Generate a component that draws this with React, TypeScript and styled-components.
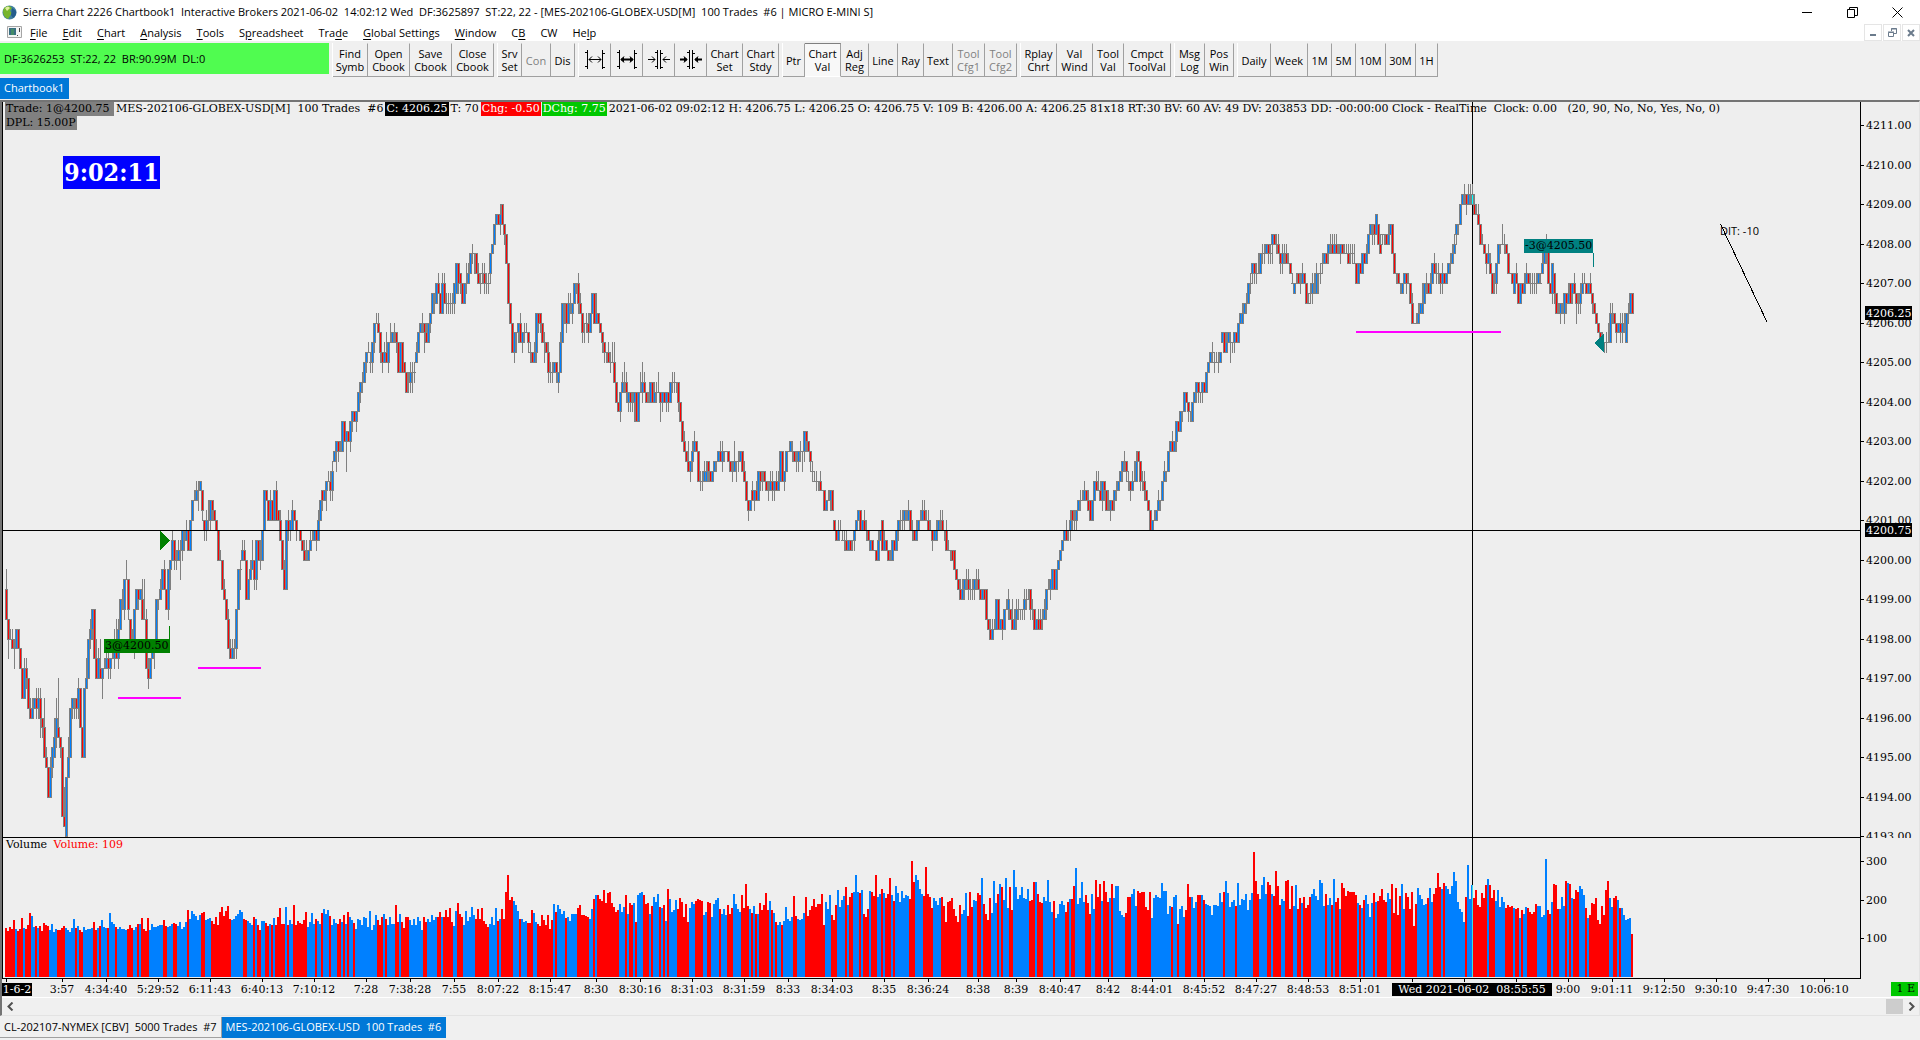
import React from "react";
import styled, { createGlobalStyle } from "styled-components";

/* ------------------------------------------------------------------ data */

// One token per bar, two pixels apart: open>close^high_low in ticks above 4193.
// A token without ">" closes where it opened.
const PRICE_ROWS: [number, string][] = [
  [6, "25>22^27 22>20_18 20^21 20>19^21 19^20_17 19>21 21>19 19>17 17>14 14>17^18 17>16^18_15 16>13 13>12^14 12>13^14 13>14 14>13^15_12 13>14^15_12 14>12^15_10 12>11_10 11>8^14 8>7^9 7>4"],
  [50, "4>7^8 7>9_6 8>10^12 10>12^14_9 11>10^16 10>9_8 9>2 2>1^5 0>6 6>8^10 8>13 13>14_12 14_12 14>13_12 13>15^16_12 15>11 11>8 8>15 15>16^18 16>20 20>21^22_19 21>23_20 23>18 18>16^20 16>18^19"],
  [100, "17>16^20 16>17_14 17^18 17>18^19 18>17^19_16 17>18_16 18^19 18>19^21_17 19>18^22 18>21^22_17 21>24 24^25_23 23>26_22 26^28 26>23_22 22>20 20^21_19 20>23_18 23>25 25>24_23 24>25 24>22^26 22^26 22>17^23 17>16^18_15"],
  [150, "16>18 18>19 19>20_17 20>24 24_23 24>25^26 25>27 27>25^28 25>23 23>27_22 27>28_25 28>30^31 30>28_27 28^29_27 28>29^30 29^30_26 29>31_28 30^31_29 30>31^32 31>29 29>32 32>34 34^35 34>35^36 35^36_33"],
  [200, "35>36 35>33_32 32>31_30 31>32^33_30 32^34_31 32>34_31 34>33_32 33>32 32>31 31>28 28^29 28>25 25>24^26 24>22 22>19^23 19>18^20 18>19^20 19^20_18 19>23_18 23>27 27^28_25 28>29^30 29>28^30 28>24 24>26"],
  [250, "26>27^28 27>28^30 28>26_25 26>30_25 30>28 28^30_27 28>31 31>35 35>34 34>32 32>34^35 34>32 32>35 35>32^36 33>32 32>30^33 30>27 27>25^28 25>32 32>31^33_30 31>32_30 31>33^34 33>32 32>31_30 31"],
  [300, "31>30 30>29 29>28^30 28^30 28>29 29>30^31 30^31 30>31 31>30_29 30>32^33 32>34 35>34_33 34>35 35>36_33 36^37 36>35^37_34 35>37^38_34 38>39 39>40_37 40>39_38 39^40 39>42 42>40 40>41_37 41>40"],
  [350, "40>42_39 42>43_41 43>42 42>43_41 43>45 45>46_44 46^47_45 46>48 48>49_47 49^50 48^49_47 48>50_47 50>52_49 52^53 52>51^53 51>49_48 49>48_47 48>49^50 49>48^51 48>50_47 50^52 50>51 51^52_50 51>50_49 50>47"],
  [400, "47>50 50>47 48>47 47>45 47_45 46>47^48_45 47^48_45 47^48_46 48>49^50 49>51 51>52 52^53_51 52>51_49 51>50^52 50>52 52>53_51 53>55 55_53 54>56 56>55^57 55>53 53>56^57 56>54^57 54^55_53 54^55_53"],
  [450, "54^55_53 54^55_53 54>56_53 55>58 58>56_55 57>56_55 56>54 54>56 56^58_55 56>57^58 57>59 59^60_58 59_57 59>57 57>56^58 56^57_55 57^58_56 57>56^58_55 56^57_55 56^57_55 57>59_56 59>60 60>62 62>63 63>62"],
  [500, "62>63^64_61 64>62 62>61_60 61>58 58>54 54>52 52>49 49>51_48 51_49 51>52_50 52>50^53 50>51_49 51^52_50 51^52 51>50_49 49^50_48 49>48 48>49^50 49>53_48 53>52_51 53>52_51 52>50 50^51_48 50>49 49>47^50_46"],
  [550, "47^48_46 47^48_46 47>48 48>47_46 46>47_45 47>50^51 50>54 54_52 54>52_51 52>54^55 54^55_53 53>54_52 54>56 56_55 56>54^57_53 54>53^55 53>51_50 52_50 52^53_51 52>51^53_50 51>53 53>55 55>52 52>53^55 53>52"],
  [600, "52>51 51>50_49 50>49_48 49_48 49>48^50 48^49_47 48^50 48>46^50 46>44 44>43 43>45_42 45>46^47 46^48_45 46>45^47_44 44>45_43 45>44_43 44^45_43 44>45_42 45>42 42>45 45^47 45>46^48_44 46>45^47 45>44 44^45"],
  [650, "44>46 46>44 44>45^46 45^46_44 45^47 45>44_42 44>45_43 45>44 44>45_43 45>44_43 44>46 46^47_45 46^47_45 46_45 46>44_43 44>42 42>40 40>39^41 39>38 38>37^40 37>38_36 38>39^40_37 39>40^41 40>39 39>36"],
  [700, "36^37_35 36^37_35 36>37^38 36>37^38 38>37_36 37>36 36>37 37>38 38_37 38>39 39>38^40 38>39^40_37 39_38 39 39>38 38>37 37^38_36 37>38^40 38_36 38^39_37 38>39 39>37 37>36^38 36>34 34>33_32"],
  [750, "33>34 35>34^36 34>35_33 35>34^36 34>37 37>36_35 37_35 37>36 36>35 35^36_34 35>36^37 36>35^37_34 35>36_34 36>35^37 35>36^37 36>39 39>36 36>37_35 37>39 39 39>40 39^40_38 39>38 38^39_37 38>39_37"],
  [800, "39^40_38 39_37 39>41_38 41>40_39 40>39 39>38_37 37^38_36 36^37 36^37_35 36_35 36>35^37 35 35>33 33>34 34^35 34>35_33 35>33 32>31 31>30 30>31^32 31^32 30^31 30^31_29 30>29^31 29>30"],
  [850, "30>29 30_29 30>31_29 31>32 32>33 33>31 31>32 32>31^33 31^32_30 31>30 29>30 30>29 29 29>28 28>30^31 30>31 32>29 29>30^31 30>29 29>28 28^29 28>30 30>29 29>31 31>32_30"],
  [900, "32^33_31 32^33_31 32>33_31 33_32 32>33^34 33>31 31^32_30 31>30 30>31^32 31>32 32^33 32>33^34 33>32^34 32^33 32>31^33 31^32 31>30_29 30>31 30>31^32 31>32 32^33_31 32>31^33 31_30 31>29^32 29^30"],
  [950, "29_28 29>28 29>27 27>26 26>25 25>24^26 24>25^26 25>26_24 26^27_25 26>25^27_24 25^26_24 25^26_24 25>26_24 26^27_25 26>25^27 25>24 24>25 25>24 25>22 22>21 21>20^22 20>21^22 21^22 21>24 24>21"],
  [1000, "21>22 22>21_20 21>23 23^24 23>24^25_22 23>22 22>21^24 21>22^23 22>23^24_21 23^24_22 23_22 23_22 23>24^25_22 24^25_23 24^25 25>23_22 23^24_22 23>21 21>22 22>21^23 22>21^23 22^23_21 22>23^24 23>25_22 25^26"],
  [1050, "25>26_24 25>27 27>25 25>27 27>28 28>29 29>30 30>31 31>30^32 31_30 31>32^33_30 33>32_31 32^33_31 32>33_31 33>34 34^35_33 34^35 34>35^36 35>34 34>33^35 34>32 32>34 34>36 36>35^37 35^37"],
  [1100, "35>34^36 34>36_33 36>35_34 35>33 33^35 33>34_32 34>33 34>35_33 35^36_34 35>36 36>37 37>38_36 38^39_37 38>37_36 36^37_35 36>35_34 35>36^37 36^38 36>38^39 39>38 38>36_35 36^37_35 36>35^37_34 35>34 34>33"],
  [1150, "33>31 31>32 32^33 32>33 33>34^35 34_33 34>36 36>37^38 37_36 37>39 39>40 40>39^41 39>40 40>42_39 42>41 41>43 43_42 43>45 45>44 44>43_42 43_42 42>44 44>45 45>46_44 46>45_44"],
  [1200, "45_44 45>46_44 46>45 45>47 47>48 48>49 49^50_48 48^49_47 48^49 48^49_47 48>49 50>51 51>49 49>50^51 50>51 50^51_48 50_49 50>51_49 51>50 50>52 52>53 52>53^54 53>54 54^55_53 54>56"],
  [1250, "56^57_55 57>58_56 58>57_56 57^58_56 57^59 57>59 59^60_58 59^60_58 59>60 60>59_58 59^60_58 60>61_58 61>60 60^61_59 60>59^61 59>58_57 58>59^60_57 59^60_58 59>58^60 58^59 58>57 56^57 55>56 56^57 57>56"],
  [1300, "57_55 56>57^58 57>56 56>54 54^55 55^56_54 55>56^57_54 56^57_55 55>57^58 57_55 57^58_56 58^59_57 58>59 59>58 59>60_58 60^61_59 60>59^61 59>60^61 60>59^61 59^60 59>60_58 60>59 59^60 59^60 59>58^60"],
  [1350, "59^60_58 59^60_58 58^60 58>56 56>58 58>57 57>59 59>58 58>59^60 59>61 61>62 62_60 62>61_60 61>63 62>60 60>59^61 61_60 61_60 61>60 60>61^62 61>62 62>59 59>57 57_56 57>56"],
  [1400, "56_55 55>56 56>57 57>56_55 56^57 56>54 54>52^55 52 52^53 52>53^54 53>54 53>54^56 54>56 56^57_55 56>55 55>56^57 56>58 58>57^59 57^58_56 57^58_56 57>56_55 56>57^58_55 57>56 56>57 57>58"],
  [1450, "58^59_57 58>59^60 59>60^61 61>62_60 62_61 62>64 64>65 65^66_64 65>64_63 64>65^66 65^66_64 64>65^66 64>63^65 63^64 63>62^64 62>60 60^61 60>59 59>58_57 58>59^60 58>57^59 57>55 56^57_55 56>58_55 58>60"],
  [1500, "60_59 60^62 60^61_59 60>59 59>57 57 57>56 55>57 57>56^58 56>54 54>56 56>55 55>56^57 56>57^58 57>56 56^57_55 56^57_55 56^57_55 56^57_55 56>57 56^57 57>58^59 58>60 60^61_58 60>56"],
  [1550, "56>55 55>58_54 57>55_54 55>53 53^54 53>54_52 54_53 53>55_52 55>54_53 54>55^56 56>54 55>56_54 56>55^57 55>54_52 54^55_53 54>55^56_53 55>56^57 56^57 56>55 55>56 56>55^57 55>54_53 54>53 53>52 52>51"],
  [1600, "51>50 50^51 50_49 50^51_49 50^52 50>53^54 53^54_52 53>52 52>51_50 51>52 52>51^53_50 51>52^53_50 52^53_51 50>53 53^54_52 53>55 55>53"],
];

// Volume bar heights, keyed by the x of the first bar in the row.
const VOLUME_ROWS: [number, string][] = [
  [6, "49 46 50 48 57 48 46 48 59 49 48 52 64 61 50 51 49 51 46 54 52 51 47 53 45 48 47 47 49 51 49 47 45 49 58 49 51 47 45 50 47 48 48 49 55 47 49 51 57 50"],
  [106, "49 49 64 55 53 50 48 50 48 48 47 48 52 49 47 50 53 53 59 48 46 59 47 53 50 50 51 52 52 57 51 50 51 53 54 53 51 55 48 50 55 67 58 66 63 61 57 62 64 65"],
  [206, "57 58 59 56 53 60 52 65 70 61 66 71 58 57 58 61 63 67 65 58 57 56 54 52 60 58 52 47 56 56 54 51 53 52 59 52 60 69 53 53 70 52 57 53"],
  [294, "72 52 56 54 53 57 65 50 55 64 53 58 56 53 64 68 63 67 61 52 58 54 53 58 55 62 53 65 60 57 54 48 58 57 52 60 59 50 66 47 52 62 57 52 60 63 58 52 60 53 53 72 55 63 55 49 60 60 57 52 58"],
  [416, "52 60 56 47 60 55 58 55 62 57 60 60 65 60 60 67 60 69 55 51 66 74 63 60 52 66 56 60 70 62 58 68 58 69 56 53 50 53 60 52 69 56 58 68 58 85 102 77 80 76 72 66 58 58 55"],
  [526, "56 54 54 67 64 55 53 51 62 57 52 62 48 57 73 65 72 68 63 66 59 60 56 63 63 63 69 72 62 62 61 60 58 68 78 82 82 78 76 87 74 84 85 74 70 65 67 73 65 70 82 63 74 72 74 55 82"],
  [640, "84 85 82 73 74 63 71 80 75 83 70 69 72 56 88 78 65 67 77 68 79 75 60 73 55 69 75 73 76 78 77 76 62 65 75 74 60 73 77 79 68 63 68 62 72 63 69 83 73 68 65 82"],
  [744, "69 93 71 68 64 71 63 63 74 67 72 84 67 76 67 64 55 52 55 52 56 70 58 56 60 81 61 58 57 58 64 80 61 67 71 78 70 73 73 83 52 75 68 82 62 57 72 87 70 77"],
  [844, "81 90 72 80 84 85 102 85 84 87 63 60 68 86 85 81 102 80 83 88 84 79 83 99 82 76 91 84 75 86 79 82 81 78 116 95 102 97 88 83 81 110 83 80 69 79 76 72 79 80"],
  [944, "71 55 75 76 79 68 61 55 72 63 67 84 61 85 70 77 76 84 82 99 73 63 57 79 64 96 74 83 93 90 77 99 69 90 67 107 90 78 82 90 79 78 88 76 77 95 95 83 75 74"],
  [1044, "80 76 97 75 65 76 59 63 73 76 72 65 75 78 78 91 109 73 79 95 75 82 74 63 83 68 97 80 93 76 96 85 75 79 93 79 91 91 66 62 60 64 80 80 83 88 71 86 84 85"],
  [1144, "85 70 67 85 59 79 82 80 79 94 86 86 63 71 70 80 82 53 68 71 60 67 93 80 80 69 75 82 82 82 77 73 72 71 62 72 72 71 84 75 85 96 84 70 75 77 71 94 72 78"],
  [1244, "77 83 67 77 84 125 96 83 78 92 100 83 95 92 83 81 106 91 72 78 76 96 97 68 91 71 92 68 79 74 80 69 72 80 83 88 81 77 97 94 71 83 72 79 72 98 75 79 68 94"],
  [1344, "89 81 86 85 85 85 82 74 72 69 77 82 73 60 74 84 75 76 81 88 77 75 84 78 93 64 89 62 81 93 68 84 80 68 85 51 73 89 82 78 72 73 79 89 75 83 89 104 90 88 94"],
  [1446, "91 88 83 91 105 96 75 68 65 55 80 112 78 92 79 87 72 70 84 79 92 98 92 79 87 76 87 70 80 75 69 72 70 71 69 68 69 59 67 63 70 69 65 63 65 73 71 71 60 62"],
  [1546, "118 67 63 75 93 92 68 68 80 71 96 94 93 79 78 87 85 91 88 82 69 59 62 74 73 79 57 53 71 62 87 96 79 70 79 81 77 69 69 62 57 58 59 43"],
];

const TIME_LABELS: [number, string][] = [
  [6, ""], [62, "3:57"], [106, "4:34:40"], [158, "5:29:52"], [210, "6:11:43"], [262, "6:40:13"],
  [314, "7:10:12"], [366, "7:28"], [410, "7:38:28"], [454, "7:55"], [498, "8:07:22"], [550, "8:15:47"],
  [596, "8:30"], [640, "8:30:16"], [692, "8:31:03"], [744, "8:31:59"], [788, "8:33"], [832, "8:34:03"],
  [884, "8:35"], [928, "8:36:24"], [978, "8:38"], [1016, "8:39"], [1060, "8:40:47"], [1108, "8:42"],
  [1152, "8:44:01"], [1204, "8:45:52"], [1256, "8:47:27"], [1308, "8:48:53"], [1360, "8:51:01"],
  [1412, ""], [1464, ""], [1516, ""], [1568, "9:00"], [1612, "9:01:11"], [1664, "9:12:50"],
  [1716, "9:30:10"], [1768, "9:47:30"], [1824, "10:06:10"],
];

const MENUS = ["_File", "_Edit", "_Chart", "_Analysis", "_Tools", "S_preadsheet", "Tra_de", "_Global Settings", "_Window", "C_B", "CW", "He_lp"];

type Tool = { label?: string; width: number; off?: boolean; pressed?: boolean; arrows?: "out" | "outBold" | "in" | "inBold"; name?: string };

const TOOL_GROUPS: Tool[][] = [
  [{ label: "Find\nSymb", width: 35 }, { label: "Open\nCbook", width: 42 }, { label: "Save\nCbook", width: 42 }, { label: "Close\nCbook", width: 42 }],
  [{ label: "Srv\nSet", width: 24 }, { label: "Con", width: 29, off: true }, { label: "Dis", width: 24 }],
  [
    { arrows: "out", name: "Increase bar spacing", width: 32 },
    { arrows: "outBold", name: "Increase bar width", width: 32 },
    { arrows: "in", name: "Decrease bar spacing", width: 32 },
    { arrows: "inBold", name: "Decrease bar width", width: 32 },
    { label: "Chart\nSet", width: 36 },
    { label: "Chart\nStdy", width: 36 },
  ],
  [
    { label: "Ptr", width: 22 }, { label: "Chart\nVal", width: 36, pressed: true }, { label: "Adj\nReg", width: 28 },
    { label: "Line", width: 29 }, { label: "Ray", width: 26 }, { label: "Text", width: 29 },
    { label: "Tool\nCfg1", width: 32, off: true }, { label: "Tool\nCfg2", width: 32, off: true },
  ],
  [{ label: "Rplay\nChrt", width: 36 }, { label: "Val\nWind", width: 36 }, { label: "Tool\nVal", width: 31 }, { label: "Cmpct\nToolVal", width: 47 }],
  [{ label: "Msg\nLog", width: 30 }, { label: "Pos\nWin", width: 29 }],
  [
    { label: "Daily", width: 33 }, { label: "Week", width: 37 }, { label: "1M", width: 24 }, { label: "5M", width: 24 },
    { label: "10M", width: 30 }, { label: "30M", width: 30 }, { label: "1H", width: 22 },
  ],
];

/* -------------------------------------------------------------- geometry */

const PANE_TOP_PRICE = 734;
const TICK = 9.875;
const levelY = (k: number) => Math.round(PANE_TOP_PRICE - k * TICK);

type Bar = { x: number; open: number; close: number; high: number; low: number; up: boolean };

const bars: Bar[] = [];
PRICE_ROWS.forEach(([start, row]) => {
  row.split(" ").forEach((token, n) => {
    const m = /^(\d+)(?:>(\d+))?(?:\^(\d+))?(?:_(\d+))?$/.exec(token)!;
    const open = +m[1];
    const close = m[2] === undefined ? open : +m[2];
    const last = bars[bars.length - 1];
    bars.push({
      x: start + n * 2,
      open,
      close,
      high: Math.max(open, close, m[3] ? +m[3] : 0),
      low: Math.min(open, close, m[4] ? +m[4] : 999),
      up: close === open ? (last ? last.up : false) : close > open,
    });
  });
});

const box = (x: number, y: number, w: number, h: number) => `M${x} ${y}h${w}v${h}h${-w}z`;
const outline = bars
  .map((b) => {
    const top = levelY(Math.max(b.open, b.close));
    const bottom = levelY(Math.min(b.open, b.close));
    const high = levelY(b.high);
    return box(b.x - 1, top, 3, bottom - top + 1) + box(b.x, high, 1, levelY(b.low) - high + 1);
  })
  .join("");
const fillPath = (up: boolean) =>
  bars
    .filter((b) => b.open !== b.close && b.close > b.open === up)
    .map((b) => {
      const top = levelY(Math.max(b.open, b.close));
      const bottom = levelY(Math.min(b.open, b.close));
      return box(b.x, top + 1, 1, bottom - top - 1);
    })
    .join("");

const upAt = new Map(bars.map((b) => [b.x, b.up]));
const VOLUME_BASE = 139;
const volumePaths = { up: "", down: "" };
VOLUME_ROWS.forEach(([start, row]) => {
  row.split(" ").forEach((v, n) => {
    const x = start + n * 2;
    volumePaths[upAt.get(x) ? "up" : "down"] += box(x - 1, VOLUME_BASE - +v, 2, +v);
  });
});

/* ---------------------------------------------------------------- styles */

const UI_FONT = '"Open Sans", "Noto Sans", sans-serif';
const CHART_FONT = '"DejaVu Serif", serif';

const Global = createGlobalStyle`
  * { box-sizing: border-box; }
  body { margin: 0; background: #f0f0f0; }
  button { font: inherit; color: inherit; border: 0; padding: 0; background: none; }
`;

const Window = styled.div`
  display: flex;
  flex-direction: column;
  height: 100vh;
  font: 11px/14px ${UI_FONT};
  color: #000;
  background: #f0f0f0;
  overflow: hidden;
`;

const TitleBar = styled.header`
  display: flex;
  align-items: center;
  gap: 6px;
  height: 24px;
  padding-left: 2px;
  background: #fff;
`;

const Title = styled.h1`
  flex: 1;
  margin: 0;
  font-size: 11px;
  font-weight: 400;
  white-space: pre;
`;

const WindowButtons = styled.div`
  display: flex;
  button { width: 46px; height: 22px; display: grid; place-items: center; }
  button + button { width: 45px; }
`;

const MenuBar = styled.nav`
  display: flex;
  align-items: center;
  gap: 8px;
  height: 17px;
  padding-left: 7px;
  background: #fff;
`;

const MenuList = styled.div`
  display: flex;
  gap: 15px;
`;

const MenuItem = styled.button`
  white-space: nowrap;
  text-underline-offset: 2px;
`;

const PaneButtons = styled.div`
  display: flex;
  gap: 1px;
  margin-left: auto;
  button { width: 18px; height: 17px; display: grid; place-items: center; border: 1px solid #e5e5e5; }
`;

const ToolBar = styled.div`
  display: flex;
  gap: 3px;
  height: 36px;
  padding-top: 2px;
`;

const Status = styled.output`
  width: 329px;
  height: 31px;
  padding-left: 4px;
  background: #50fc50;
  line-height: 31px;
  white-space: pre;
`;

const ToolGroup = styled.div`
  display: flex;
  height: 34px;
  border-left: 1px solid #fff;
`;

const ToolButton = styled.button<{ $width: number; $off?: boolean; $pressed?: boolean }>`
  display: grid;
  place-items: center;
  width: ${(p) => p.$width}px;
  border-right: 1px solid #a0a0a0;
  border-bottom: 1px solid ${(p) => (p.$pressed ? "#fff" : "#a0a0a0")};
  border-top: 1px solid ${(p) => (p.$pressed ? "#808080" : "#f0f0f0")};
  background: ${(p) => (p.$pressed ? "#f8f8f8" : "#f0f0f0")};
  color: ${(p) => (p.$off ? "#808080" : "#000")};
  line-height: 13px;
  white-space: pre;
  text-align: center;
`;

const TabStrip = styled.div<{ $height: number }>`
  display: flex;
  height: ${(p) => p.$height}px;
  padding-top: 1px;
`;

const Tab = styled.button<{ $active?: boolean }>`
  padding: 0 4px;
  white-space: pre;
  height: 21px;
  color: ${(p) => (p.$active ? "#fff" : "#000")};
  background: ${(p) => (p.$active ? "#0078d7" : "#f0f0f0")};
  border-right: 1px solid ${(p) => (p.$active ? "#0078d7" : "#a0a0a0")};
  border-bottom: 1px solid ${(p) => (p.$active ? "#0078d7" : "#a0a0a0")};
`;

const ChartFrame = styled.main`
  flex: 1;
  min-height: 0;
  display: flex;
  flex-direction: column;
  border: solid;
  border-width: 2px 1px 1px 2px;
  border-color: #747474 #e3e3e3 #e3e3e3 #747474;
  background: #eeeeee;
  font: 11px/14px ${CHART_FONT};
`;

const Grid = styled.div`
  flex: 1;
  min-height: 0;
  display: grid;
  grid-template-columns: 1fr 58px;
  grid-template-rows: 1fr 141px 18px;
`;

const Pane = styled.section`
  position: relative;
  overflow: hidden;
  border: solid #000;
  border-width: 0 1px 1px 1px;
`;

const Axis = styled.aside`
  overflow: hidden;
`;

const Canvas = styled.svg`
  display: block;
  width: 100%;
  height: 100%;
  overflow: hidden;
  text { font: 11px ${CHART_FONT}; white-space: pre; }
`;

const PlotCanvas = styled(Canvas)`
  position: absolute;
  left: 0;
  top: 0;
`;

const Legend = styled.div`
  position: absolute;
  top: 0;
  left: 2px;
  right: 0;
  display: flex;
  flex-wrap: wrap;
  column-gap: 1px;
  white-space: pre;
`;

const Value = styled.span<{ $bg?: string; $color?: string }>`
  background: ${(p) => p.$bg ?? "transparent"};
  color: ${(p) => p.$color ?? "#000"};
  padding: 0 1px;
`;

const LegendBreak = styled.span`
  flex-basis: 100%;
`;

const Mark = styled.div<{ $x: number; $y: number; $bg?: string }>`
  position: absolute;
  left: ${(p) => p.$x}px;
  top: ${(p) => p.$y}px;
  padding: 0 1px;
  background: ${(p) => p.$bg ?? "transparent"};
  white-space: pre;
`;

const Clock = styled(Mark)`
  padding: 0 1px;
  color: #fff;
  font: 700 25px/33px "DejaVu Serif Condensed", "DejaVu Serif", serif;
`;

const Note = styled(Mark)`
  font-family: ${UI_FONT};
`;

const TimeAxis = styled.div`
  grid-column: 1 / -1;
  position: relative;
`;

const TimeTag = styled.div<{ $x: number; $width: number }>`
  position: absolute;
  left: ${(p) => p.$x}px;
  top: 4px;
  width: ${(p) => p.$width}px;
  height: 13px;
  line-height: 13px;
  background: #000;
  color: #fff;
  text-align: center;
  white-space: pre;
  overflow: hidden;
`;

const Engine = styled.div`
  position: absolute;
  right: 1px;
  top: 3px;
  padding: 0 3px 0 5px;
  background: #00c800;
`;

const ScrollBar = styled.div`
  display: flex;
  align-items: center;
  justify-content: space-between;
  height: 18px;
  border-top: 1px solid #fff;
  background: #f0f0f0;
  button { width: 16px; height: 16px; display: grid; place-items: center; }
`;

const Thumb = styled.span`
  width: 17px;
  height: 15px;
  margin-left: auto;
  background: #cdcdcd;
`;

/* ------------------------------------------------------------ components */

const Globe = () => (
  <svg width="15" height="15" viewBox="0 0 15 15" aria-hidden="true">
    <circle cx="7.5" cy="7.5" r="7" fill="#3f7f9f" />
    <path d="M2 3Q7-1 10 3L8 6 10 8 8 11 6 14Q1 12 1 6z" fill="#78b52c" />
    <path d="M3 3Q6 0 8 3L5 6z" fill="#e2efa0" />
    <path d="M10 3L14 6Q15 10 11 13L9 10z" fill="#255c8c" />
  </svg>
);

const ChartIcon = () => (
  <svg width="15" height="14" viewBox="0 0 15 14" aria-hidden="true">
    <path d="M.5.5h14v11H.5z" fill="#f4f4f4" stroke="#a5a5a5" />
    <path d="M2 2h7v7H2z" fill="#3a6f82" />
    <path d="M4 3h3v6H4z" fill="#448b68" />
    <path d="M12 2h1v4h-1zM10 9h1v1h-1z" fill="#444" />
  </svg>
);

const SpacingIcon = ({ kind }: { kind: NonNullable<Tool["arrows"]> }) => {
  const bold = kind.endsWith("Bold");
  return (
    <svg width="22" height="20" viewBox="0 0 22 20" aria-hidden="true" fill="none" stroke="#000">
      {kind.startsWith("out") ? (
        <>
          <path d="M3.500 0v19M18.500 0v19M1 2.500h2M1 16.500h2M18 3.500h3M18 17.500h3" />
          <path d="M5 9.500h12" strokeWidth={bold ? 2 : 1} />
          <path d="M8 6.500L5 9.500 8 12.500M14 6.500L17 9.500 14 12.500" fill={bold ? "#000" : "none"} />
        </>
      ) : (
        <>
          <path d="M9.500 0v19M12.500 0v19M7 2.500h2M7 16.500h2M13 3.500h2M13 17.500h2" />
          <path d="M0 9.500h7M15 9.500h7" strokeWidth={bold ? 2 : 1} />
          <path d="M4 6.500L7 9.500 4 12.500M18 6.500L15 9.500 18 12.500" fill={bold ? "#000" : "none"} />
        </>
      )}
    </svg>
  );
};

const MenuLabel = ({ text }: { text: string }) => {
  const at = text.indexOf("_");
  if (at < 0) return <>{text}</>;
  return (
    <>
      {text.slice(0, at)}
      <u>{text[at + 1]}</u>
      {text.slice(at + 2)}
    </>
  );
};

const PricePane = () => (
  <Pane aria-label="Price">
    <PlotCanvas shapeRendering="crispEdges">
      <g transform="translate(-3 0)">
        <path d={outline} fill="#808080" />
        <path d={fillPath(true)} fill="#0080ff" />
        <path d={fillPath(false)} fill="#ff0000" />
        <path d={box(3, levelY(31), 2000, 1)} fill="#000" />
        <path d={box(1472, 0, 1, levelY(66)) + box(1472, levelY(64) + 1, 1, 1000)} fill="#000" />
        <path d={box(1472, levelY(65) + 1, 1, 9)} fill="#00ffff" />
        <path d={box(118, 595, 63, 2) + box(198, 565, 63, 2) + box(1356, 229, 145, 2)} fill="#ff00ff" />
        <path d="M160 429v19l10-9.500z" fill="#008000" />
        <path d={box(169, 524, 1, 14)} fill="#008000" />
        <path d="M1604 231v20l-10-10z" fill="#008080" />
        <path d={box(1593, 151, 1, 14)} fill="#008080" />
        <path d="M1720.500 122L1767 220" stroke="#000" />
      </g>
    </PlotCanvas>
    <Legend>
      <Value $bg="#808080">{"Trade: 1@4200.75 "}</Value>
      <Value>{"MES-202106-GLOBEX-USD[M]  100 Trades  #6"}</Value>
      <Value $bg="#000" $color="#fff">C: 4206.25</Value>
      <Value>T: 70</Value>
      <Value $bg="#f00" $color="#fff">Chg: -0.50</Value>
      <Value $bg="#00c800" $color="#fff">DChg: 7.75</Value>
      <Value>2021-06-02 09:02:12 H: 4206.75 L: 4206.25 O: 4206.75 V: 109 B: 4206.00 A: 4206.25 81x18 RT:30 BV: 60 AV: 49 DV: 203853 DD: -00:00:00 Clock - RealTime  Clock: 0.00   (20, 90, No, No, Yes, No, 0)</Value>
      <LegendBreak />
      <Value $bg="#808080">DPL: 15.00P</Value>
    </Legend>
    <Clock $x={60} $y={54} $bg="#0000ff">9:02:11</Clock>
    <Mark $x={101} $y={537} $bg="#008000">3@4200.50</Mark>
    <Mark $x={1521} $y={137} $bg="#008080">-3@4205.50</Mark>
    <Note $x={1716} $y={122}>DIT: -10</Note>
  </Pane>
);

const prices = Array.from({ length: 19 }, (_, i) => 4211 - i);

const AxisTag = ({ y, text }: { y: number; text: string }) => (
  <g>
    <rect x="4" y={y - 7} width="47" height="14" fill="#000" />
    <text x="5" y={y + 4} fill="#fff">{text}</text>
  </g>
);

const PriceAxis = () => (
  <Axis>
    <Canvas shapeRendering="crispEdges">
      {prices.map((p) => {
        const y = levelY((p - 4193) * 4);
        return (
          <g key={p}>
            <rect y={y} width="3" height="1" />
            <text x="5" y={y + 4}>{p.toFixed(2)}</text>
          </g>
        );
      })}
      <AxisTag y={211} text="4206.25" />
      <AxisTag y={428} text="4200.75" />
    </Canvas>
  </Axis>
);

const VolumePane = () => (
  <Pane aria-label="Volume">
    <PlotCanvas shapeRendering="crispEdges">
      <g transform="translate(-3 0)">
        <path d={volumePaths.up} fill="#0080ff" />
        <path d={volumePaths.down} fill="#ff0000" />
        <path d={box(1472, 0, 1, VOLUME_BASE - 92)} fill="#000" />
        <path d={box(1472, VOLUME_BASE - 92, 1, 92)} fill="#40e0e0" />
      </g>
    </PlotCanvas>
    <Legend>
      <Value>{"Volume "}</Value>
      <Value $color="#f00">Volume: 109</Value>
    </Legend>
  </Pane>
);

const VolumeAxis = () => (
  <Axis>
    <Canvas shapeRendering="crispEdges">
      {[300, 200, 100].map((v) => {
        const y = Math.round(VOLUME_BASE - v * 0.387);
        return (
          <g key={v}>
            <rect y={y} width="3" height="1" />
            <text x="5" y={y + 4}>{v}</text>
          </g>
        );
      })}
    </Canvas>
  </Axis>
);

const TimeScale = () => (
  <TimeAxis>
    <Canvas shapeRendering="crispEdges">
      <g transform="translate(-2 0)">
        {TIME_LABELS.map(([x, label]) => (
          <g key={x}>
            <rect x={x} width="1" height="3" />
            <text x={x} y="14" textAnchor="middle">{label}</text>
          </g>
        ))}
      </g>
    </Canvas>
    <TimeTag $x={0} $width={30}>1-6-2</TimeTag>
    <TimeTag $x={1390} $width={160}>{"Wed 2021-06-02  08:55:55"}</TimeTag>
    <Engine>1 E</Engine>
  </TimeAxis>
);

export default function App() {
  return (
    <Window>
      <Global />
      <TitleBar>
        <Globe />
        <Title>{"Sierra Chart 2226 Chartbook1  Interactive Brokers 2021-06-02  14:02:12 Wed  DF:3625897  ST:22, 22 - [MES-202106-GLOBEX-USD[M]  100 Trades  #6 | MICRO E-MINI S]"}</Title>
        <WindowButtons>
          <button aria-label="Minimize">
            <svg width="10" height="10" stroke="#000"><path d="M0 5.500h10" /></svg>
          </button>
          <button aria-label="Restore">
            <svg width="11" height="11" fill="none" stroke="#000"><path d="M.5 2.500h7v8h-7zM2.500 2.500v-2h8v8h-3" /></svg>
          </button>
          <button aria-label="Close">
            <svg width="11" height="11" stroke="#000"><path d="M.5.5l10 10M10.500.5l-10 10" /></svg>
          </button>
        </WindowButtons>
      </TitleBar>
      <MenuBar>
        <ChartIcon />
        <MenuList>
          {MENUS.map((m) => (
            <MenuItem key={m}><MenuLabel text={m} /></MenuItem>
          ))}
        </MenuList>
        <PaneButtons>
          <button aria-label="Minimize chart">
            <svg width="8" height="8" fill="#6b7b8c"><path d="M1 5h6v2H1z" /></svg>
          </button>
          <button aria-label="Restore chart">
            <svg width="9" height="9" fill="none" stroke="#6b7b8c"><path d="M.5 4.500h5v4h-5zM0 4h6M3.500 3V.5h5v5H6M3 1h6" /></svg>
          </button>
          <button aria-label="Close chart">
            <svg width="8" height="8" stroke="#6b7b8c" strokeWidth="2"><path d="M1 1l6 6M7 1L1 7" /></svg>
          </button>
        </PaneButtons>
      </MenuBar>
      <ToolBar>
        <Status>{"DF:3626253  ST:22, 22  BR:90.99M  DL:0"}</Status>
        {TOOL_GROUPS.map((group, g) => (
          <ToolGroup key={g}>
            {group.map((t) => (
              <ToolButton key={t.label ?? t.name} $width={t.width} $off={t.off} $pressed={t.pressed} disabled={t.off} aria-label={t.name} aria-pressed={t.pressed}>
                {t.arrows ? <SpacingIcon kind={t.arrows} /> : t.label}
              </ToolButton>
            ))}
          </ToolGroup>
        ))}
      </ToolBar>
      <TabStrip $height={23}>
        <Tab $active>Chartbook1</Tab>
      </TabStrip>
      <ChartFrame>
        <Grid>
          <PricePane />
          <PriceAxis />
          <VolumePane />
          <VolumeAxis />
          <TimeScale />
        </Grid>
        <ScrollBar>
          <button aria-label="Scroll left">
            <svg width="7" height="9" fill="none" stroke="#505050" strokeWidth="2"><path d="M5.500.5l-4 4 4 4" /></svg>
          </button>
          <Thumb />
          <button aria-label="Scroll right">
            <svg width="7" height="9" fill="none" stroke="#505050" strokeWidth="2"><path d="M1.500.5l4 4-4 4" /></svg>
          </button>
        </ScrollBar>
      </ChartFrame>
      <TabStrip $height={24}>
        <Tab>{"CL-202107-NYMEX [CBV]  5000 Trades  #7"}</Tab>
        <Tab $active>{"MES-202106-GLOBEX-USD  100 Trades  #6"}</Tab>
      </TabStrip>
    </Window>
  );
}
